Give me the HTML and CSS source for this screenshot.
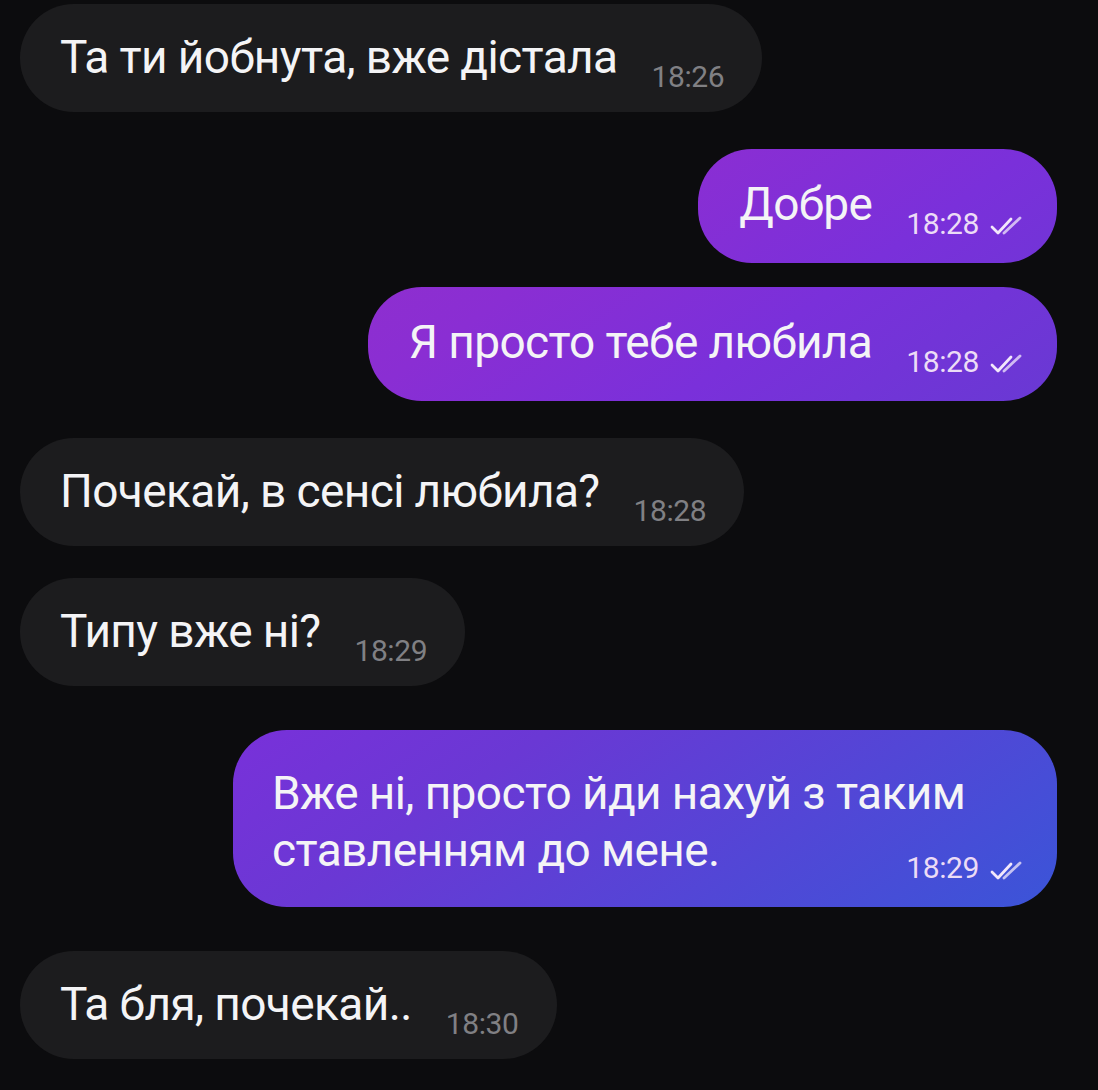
FILE: index.html
```html
<!DOCTYPE html>
<html lang="uk">
<head>
<meta charset="utf-8">
<title>Chat</title>
<link rel="stylesheet" href="styles.css">
</head>
<body>
<div class="chat">
  <div class="row in">
    <div class="msg">
      <span class="text">Та ти йобнута, вже дістала</span>
      <span class="time">18:26</span>
    </div>
  </div>
  <div class="row out">
    <div class="msg">
      <span class="text">Добре</span>
      <span class="time">18:28</span>
      <svg class="check" viewBox="0 0 36 22" width="36" height="22"><path d="M3 12 L9 18 L22 4" /><path class="second" d="M15 18 L31 3" /></svg>
    </div>
  </div>
  <div class="row out cont">
    <div class="msg">
      <span class="text">Я просто тебе любила</span>
      <span class="time">18:28</span>
      <svg class="check" viewBox="0 0 36 22" width="36" height="22"><path d="M3 12 L9 18 L22 4" /><path class="second" d="M15 18 L31 3" /></svg>
    </div>
  </div>
  <div class="row in">
    <div class="msg">
      <span class="text">Почекай, в сенсі любила?</span>
      <span class="time">18:28</span>
    </div>
  </div>
  <div class="row in cont">
    <div class="msg">
      <span class="text">Типу вже ні?</span>
      <span class="time">18:29</span>
    </div>
  </div>
  <div class="row out far">
    <div class="msg multi">
      <span class="text line">Вже ні, просто йди нахуй з таким</span>
      <div class="last-line">
        <span class="text">ставленням до мене.</span>
        <span class="meta">
          <span class="time">18:29</span>
          <svg class="check" viewBox="0 0 36 22" width="36" height="22"><path d="M3 12 L9 18 L22 4" /><path class="second" d="M15 18 L31 3" /></svg>
        </span>
      </div>
    </div>
  </div>
  <div class="row in far">
    <div class="msg">
      <span class="text">Та бля, почекай..</span>
      <span class="time">18:30</span>
    </div>
  </div>
</div>
</body>
</html>
```

FILE: styles.css
```css
html, body {
  margin: 0;
  padding: 0;
}

body {
  width: 1098px;
  height: 1090px;
  overflow: hidden;
  background: #0c0c0e;
  font-family: Roboto, "Noto Sans", "Liberation Sans", sans-serif;
  color: #f4f4f6;
}

.chat {
  display: flex;
  flex-direction: column;
  padding: 4px 41px 0 20px;
}

.row {
  display: flex;
  margin-top: 37px;
}

.row:first-child {
  margin-top: 0;
}

.row.out.cont {
  margin-top: 24px;
}

.row.in.cont {
  margin-top: 32px;
}

.row.far {
  margin-top: 44px;
}

.row.in {
  justify-content: flex-start;
}

.row.out {
  justify-content: flex-end;
}

.msg {
  display: flex;
  align-items: flex-end;
  border-radius: 54px;
}

.in .msg {
  background: #1c1c1e;
  padding: 25px 38px 27px 40px;
}

.out .msg {
  background: linear-gradient(145deg, #a22cbf 0%, #962fc8 18%, #8a2ed3 35%, #7a30da 47%, #6a38d4 60%, #3a55d8 89%, #3458d8 100%);
  background-attachment: fixed;
  padding: 27px 32px 31px 41px;
}

.text {
  font-size: 46px;
  line-height: 56px;
  letter-spacing: -0.6px;
  white-space: nowrap;
}

.time {
  font-size: 30px;
  line-height: 30px;
  margin-left: 34px;
  margin-bottom: -7px;
  letter-spacing: -0.4px;
}

.in .time {
  color: #808084;
}

.out .time {
  color: #ecdcf6;
}

.check {
  flex: none;
  margin-left: 10px;
  margin-bottom: -5px;
  fill: none;
  stroke: #f2e8fb;
  stroke-width: 2.8;
  stroke-linecap: round;
  stroke-linejoin: round;
}

.check .second {
  stroke: rgba(242, 232, 251, 0.75);
}

.msg.multi {
  flex-direction: column;
  align-items: stretch;
  width: 824px;
  box-sizing: border-box;
  padding: 35px 32px 28px 39px;
}

.msg.multi .text {
  line-height: 57px;
}

.line {
  display: block;
}

.last-line {
  display: flex;
  justify-content: space-between;
  align-items: flex-end;
}

.meta {
  display: flex;
  align-items: flex-end;
  margin-bottom: -4px;
}

.meta .time {
  margin-left: 0;
  margin-bottom: 0;
}

.meta .check {
  margin-bottom: 1px;
}
```
